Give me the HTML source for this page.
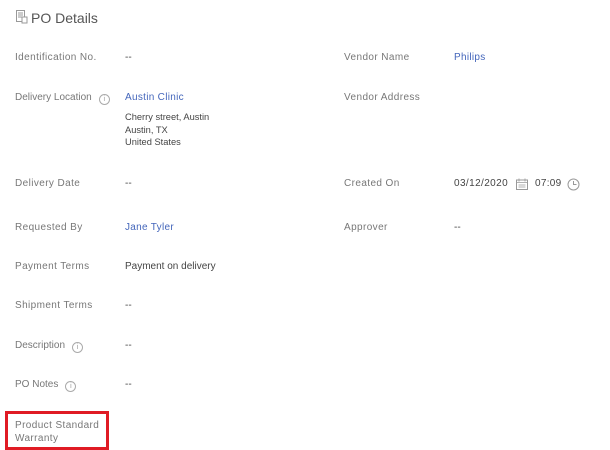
<!DOCTYPE html>
<html><head><style>
body{margin:0;width:610px;height:449px;background:#fff;font-family:"Liberation Sans",sans-serif;position:relative;overflow:hidden}
.t{position:absolute;font-size:10px;line-height:12px;white-space:nowrap}
.l{color:#777;letter-spacing:.4px}
.v{color:#444}
.a{color:#4466bb;letter-spacing:.3px}
.i{display:inline-block;width:9px;height:9px;border:1px solid #aaa;border-radius:50%;font-size:7px;line-height:9px;text-align:center;color:#999;margin-left:7px;vertical-align:-1px;letter-spacing:0}
</style></head><body>
<svg style="position:absolute;left:16px;top:10px" width="12" height="14" viewBox="0 0 12 14"><rect x="0.5" y="0.5" width="8" height="11" fill="none" stroke="#999"/><path d="M2 3h5M2 5h5M2 7h4" stroke="#999"/><rect x="6" y="7" width="5" height="6" fill="#fff" stroke="#999"/></svg>
<div class="t" style="left:31px;top:10px;font-size:14px;line-height:17px;color:#555">PO Details</div>

<div class="t l" style="left:15px;top:52px">Identification No.</div>
<div class="t v" style="left:125px;top:52px">--</div>
<div class="t l" style="left:344px;top:52px">Vendor Name</div>
<div class="t a" style="left:454px;top:52px">Philips</div>

<div class="t l" style="left:15px;top:92px;letter-spacing:0">Delivery Location<span class="i">i</span></div>
<div class="t a" style="left:125px;top:92px">Austin Clinic</div>
<div class="t v" style="left:125px;top:111px;font-size:9.3px;line-height:12.5px">Cherry street, Austin<br>Austin, TX<br>United States</div>
<div class="t l" style="left:344px;top:92px">Vendor Address</div>

<div class="t l" style="left:15px;top:178px">Delivery Date</div>
<div class="t v" style="left:125px;top:178px">--</div>
<div class="t l" style="left:344px;top:178px">Created On</div>
<div class="t v" style="left:454px;top:178px;letter-spacing:.4px">03/12/2020</div>
<svg style="position:absolute;left:516px;top:178px" width="12" height="12" viewBox="0 0 12 12"><rect x="0.5" y="2" width="11" height="9.5" fill="none" stroke="#999"/><path d="M0.5 4.5h11M3 0.5v3M9 0.5v3M2.5 7h7M2.5 9h7" stroke="#999" stroke-width="0.8"/></svg>
<div class="t v" style="left:535px;top:178px;letter-spacing:.3px">07:09</div>
<svg style="position:absolute;left:567px;top:178px" width="13" height="13" viewBox="0 0 13 13"><circle cx="6.5" cy="6.5" r="5.5" fill="none" stroke="#999"/><path d="M6.5 3v3.5h3" fill="none" stroke="#999"/></svg>

<div class="t l" style="left:15px;top:222px">Requested By</div>
<div class="t a" style="left:125px;top:222px">Jane Tyler</div>
<div class="t l" style="left:344px;top:222px">Approver</div>
<div class="t v" style="left:454px;top:222px">--</div>

<div class="t l" style="left:15px;top:261px">Payment Terms</div>
<div class="t v" style="left:125px;top:261px">Payment on delivery</div>

<div class="t l" style="left:15px;top:300px">Shipment Terms</div>
<div class="t v" style="left:125px;top:300px">--</div>

<div class="t l" style="left:15px;top:340px;letter-spacing:0">Description<span class="i">i</span></div>
<div class="t v" style="left:125px;top:340px">--</div>

<div class="t l" style="left:15px;top:379px;letter-spacing:0">PO Notes<span class="i">i</span></div>
<div class="t v" style="left:125px;top:379px">--</div>

<div style="position:absolute;left:5px;top:411px;width:98px;height:33px;border:3px solid #e01b24"></div>
<div class="t l" style="left:15px;top:419px;line-height:13px">Product Standard<br>Warranty</div>
</body></html>
